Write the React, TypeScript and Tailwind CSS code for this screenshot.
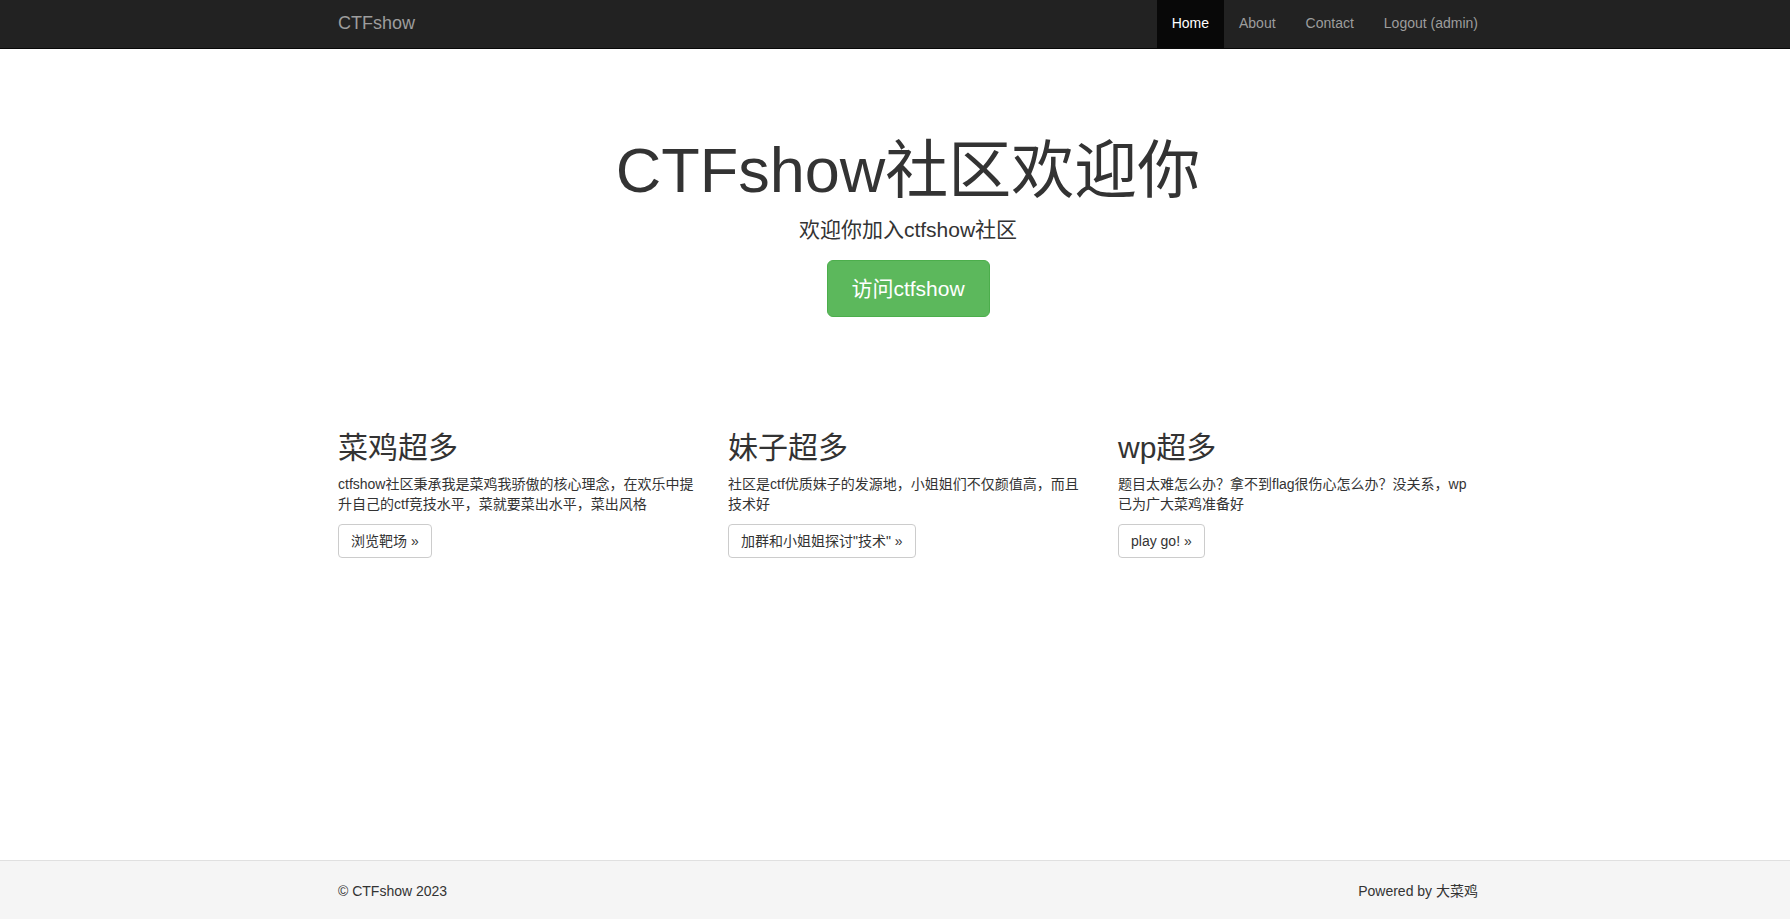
const font = "font-['Liberation_Sans','Noto_Sans_CJK_SC',sans-serif]";

const navItems = [
  { label: "Home", active: true },
  { label: "About" },
  { label: "Contact" },
  { label: "Logout (admin)" },
];

const features = [
  {
    title: "菜鸡超多",
    text: "ctfshow社区秉承我是菜鸡我骄傲的核心理念，在欢乐中提升自己的ctf竞技水平，菜就要菜出水平，菜出风格",
    btn: "浏览靶场 »",
  },
  {
    title: "妹子超多",
    text: "社区是ctf优质妹子的发源地，小姐姐们不仅颜值高，而且技术好",
    btn: "加群和小姐姐探讨\"技术\" »",
  },
  {
    title: "wp超多",
    text: "题目太难怎么办？拿不到flag很伤心怎么办？没关系，wp已为广大菜鸡准备好",
    btn: "play go! »",
  },
];

export default function App() {
  return (
    <div className={`${font} flex h-screen flex-col bg-white text-[14px] text-[#333]`}>
      {/* navbar */}
      <nav className="h-[49px] shrink-0 border-b border-[#080808] bg-[#222]">
        <div className="ml-[323px] flex h-full w-[1170px] items-stretch justify-between">
          <a className="flex items-center px-[15px] pb-[2px] text-[18px] text-[#9d9d9d]">CTFshow</a>
          <ul className="flex">
            {navItems.map((item) => (
              <li
                key={item.label}
                className={`flex items-center px-[15px] pb-[2px] leading-[20px] ${
                  item.active ? "bg-[#080808] text-white" : "text-[#9d9d9d]"
                }`}
              >
                {item.label}
              </li>
            ))}
          </ul>
        </div>
      </nav>

      <main className="flex-1">
        <div className="ml-[323px] w-[1170px] px-[15px]">
          {/* jumbotron */}
          <div className="flex flex-col items-center pt-[86px]">
            <h1 className="text-[63px] leading-[70px]">CTFshow社区欢迎你</h1>
            <p className="mt-[10px] text-[21px] leading-[30px]">欢迎你加入ctfshow社区</p>
            <a className="mt-[15px] flex h-[57px] w-[163px] items-center justify-center rounded-[6px] border border-[#4cae4c] bg-[#5cb85c] text-[21px] text-white">
              访问ctfshow
            </a>
          </div>

          {/* columns */}
          <div className="mt-[114px] grid grid-cols-3 gap-[30px]">
            {features.map((f) => (
              <div key={f.title}>
                <h2 className="text-[30px] leading-[33px]">{f.title}</h2>
                <p className="mt-[10px] leading-[20px]">{f.text}</p>
                <a className="mt-[10px] inline-block rounded-[4px] border border-[#ccc] px-[12px] py-[6px] leading-[20px]">
                  {f.btn}
                </a>
              </div>
            ))}
          </div>
        </div>
      </main>

      {/* footer */}
      <footer className="h-[59px] shrink-0 border-t border-[#e0e0e0] bg-[#f5f5f5]">
        <div className="ml-[323px] flex h-full w-[1170px] items-center justify-between px-[15px] pt-[3px]">
          <span>© CTFshow 2023</span>
          <span>Powered by 大菜鸡</span>
        </div>
      </footer>
    </div>
  );
}
